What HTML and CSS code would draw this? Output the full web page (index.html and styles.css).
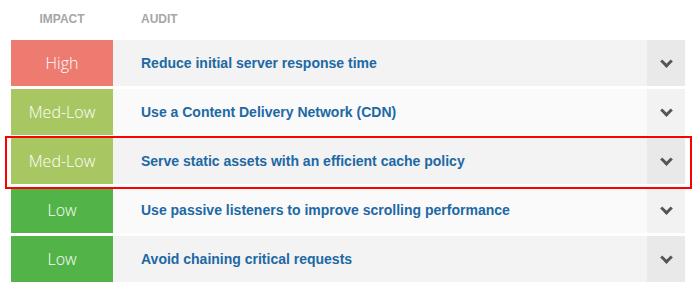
FILE: index.html
```html
<!DOCTYPE html>
<html lang="en">
<head>
  <meta charset="UTF-8">
  <title>Audits</title>
  <link rel="stylesheet" href="styles.css">
</head>
<body>
  <div class="audits">
    <div class="head">
      <span class="col-impact">Impact</span>
      <span class="col-audit">Audit</span>
    </div>

    <div class="row odd">
      <div class="impact high">High</div>
      <div class="title">Reduce initial server response time</div>
      <div class="toggle"><span class="chev"></span></div>
    </div>
    <div class="row">
      <div class="impact medlow">Med-Low</div>
      <div class="title">Use a Content Delivery Network (CDN)</div>
      <div class="toggle"><span class="chev"></span></div>
    </div>
    <div class="row odd marked">
      <div class="impact medlow">Med-Low</div>
      <div class="title">Serve static assets with an efficient cache policy</div>
      <div class="toggle"><span class="chev"></span></div>
    </div>
    <div class="row">
      <div class="impact low">Low</div>
      <div class="title">Use passive listeners to improve scrolling performance</div>
      <div class="toggle"><span class="chev"></span></div>
    </div>
    <div class="row odd">
      <div class="impact low">Low</div>
      <div class="title">Avoid chaining critical requests</div>
      <div class="toggle"><span class="chev"></span></div>
    </div>
  </div>
</body>
</html>
```

FILE: styles.css
```css
*{
  margin: 0;
  padding: 0;
  box-sizing: border-box;
}
body{
  font-family: "Liberation Sans", Arial, sans-serif;
  background: #fff;
}

.audits{
  width: 674px;
  margin-left: 11px;
  display: flex;
  flex-direction: column;
  gap: 3px;
}

/*表头*/
.head{
  display: grid;
  grid-template-columns: 102px 1fr;
  height: 37px;
  align-items: center;
  padding-top: 1px;
  font-size: 12px;
  font-weight: bold;
  color: #a6a6a6;
  text-transform: uppercase;
}
.col-impact{
  text-align: center;
}
.col-audit{
  padding-left: 28px;
}

.row{
  position: relative;
  display: grid;
  grid-template-columns: 102px 1fr 38px;
  height: 46px;
  background: #fafafa;
}
.row.odd{
  background: #f3f3f3;
}
.impact{
  display: flex;
  align-items: center;
  justify-content: center;
  font-family: "Open Sans", sans-serif;
  font-weight: 300;
  font-size: 16px;
  color: #fff;
}
.high{ background: #ee7b70; }
.medlow{ background: #a8c762; }
.low{ background: #52b348; }

.title{
  display: flex;
  align-items: center;
  padding-left: 28px;
  font-size: 14px;
  font-weight: bold;
  color: #2068a4;
}
.toggle{
  display: flex;
  align-items: center;
  justify-content: center;
  background: #f2f2f2;
}
.odd .toggle{
  background: #e9e9e9;
}
.chev{
  width: 9px;
  height: 9px;
  border-right: 3px solid #555;
  border-bottom: 3px solid #555;
  transform: translateY(-2px) rotate(45deg);
}

/*红框标记*/
.marked{
  z-index: 1;
}
.marked::after{
  content: '';
  position: absolute;
  left: -6px;
  right: -7px;
  top: -2px;
  bottom: -5px;
  border: 2px solid #f00;
}
```
